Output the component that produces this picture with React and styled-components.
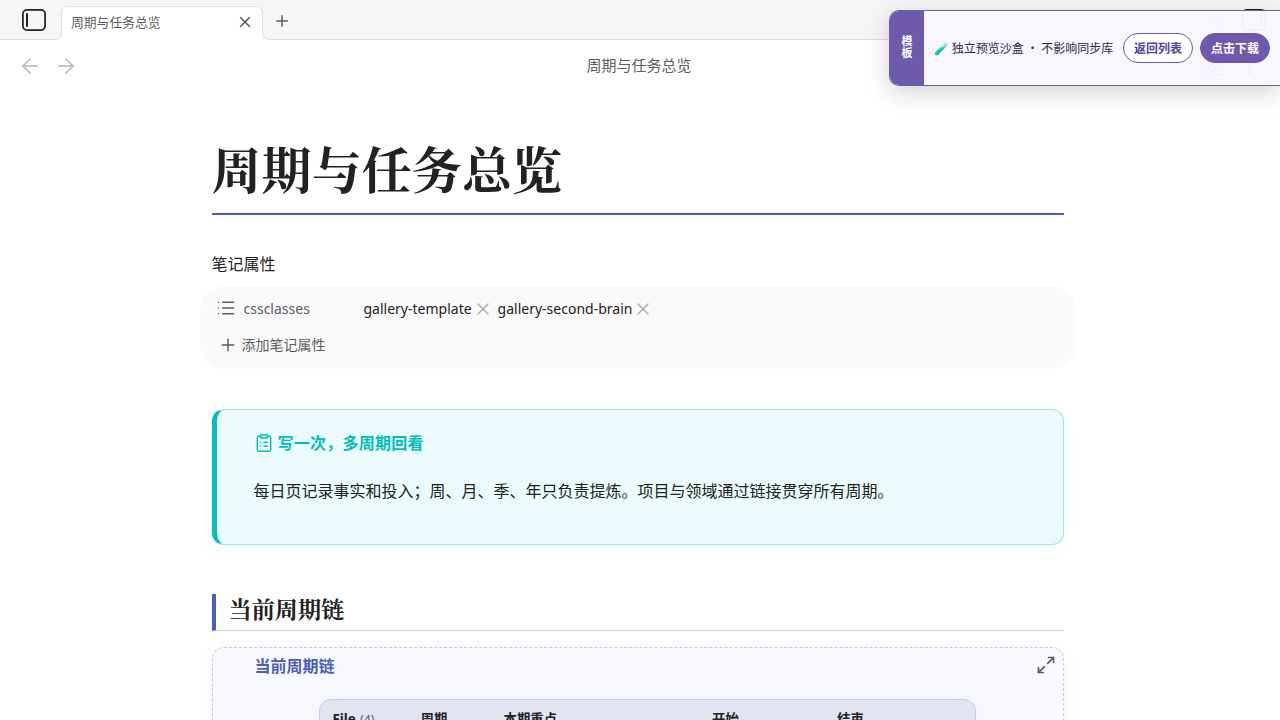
import styled, { createGlobalStyle } from 'styled-components'
import {
  ArrowLeft,
  ArrowRight,
  ChevronDown,
  ClipboardList,
  EllipsisVertical,
  List,
  Maximize2,
  PenLine,
  Plus,
  X,
} from 'lucide-react'

//STYLES
const GlobalStyle = createGlobalStyle`
  * {
    box-sizing: border-box;
  }

  body {
    margin: 0;
    background-color: #ffffff;
    color: #222222;
    font-family: 'Noto Sans', 'Noto Sans CJK SC', sans-serif;
    font-size: 16px;
    overflow: hidden;
  }

  svg {
    display: block;
    flex-shrink: 0;
  }
`

const Workspace = styled.div`
  height: 720px;
  overflow: hidden;
`

const TabBar = styled.div`
  display: flex;
  align-items: flex-end;
  height: 40px;
  padding: 0 14px 0 22px;
  background-color: #f6f6f6;
  box-shadow: inset 0 -1px 0 #e0e0e0;
`

const SidebarToggle = styled.div`
  height: 32px;
  margin-right: ${(props) => (props.$right ? 0 : '15px')};
  color: #222222;
`

const Tab = styled.div`
  position: relative;
  display: flex;
  align-items: center;
  justify-content: space-between;
  width: 202px;
  height: 34px;
  padding: 0 8px 4px 9px;
  background-color: #ffffff;
  border: 1px solid #e0e0e0;
  border-bottom: none;
  border-radius: 6px 6px 0 0;
  color: #5c5c5c;
  font-size: 12.8px;

  &::before,
  &::after {
    content: '';
    position: absolute;
    bottom: 0;
    width: 7px;
    height: 7px;
  }

  &::before {
    left: -7px;
    background: radial-gradient(
      circle at 0 0,
      #f6f6f6 5.5px,
      #e0e0e0 6px,
      #e0e0e0 6.5px,
      #ffffff 7px
    );
  }

  &::after {
    right: -7px;
    background: radial-gradient(
      circle at 100% 0,
      #f6f6f6 5.5px,
      #e0e0e0 6px,
      #e0e0e0 6.5px,
      #ffffff 7px
    );
  }
`

const NewTab = styled.div`
  display: flex;
  align-items: center;
  height: 38px;
  margin-left: 10px;
  color: #5c5c5c;
`

const TabBarEnd = styled.div`
  display: flex;
  align-items: center;
  gap: 15px;
  margin-left: auto;
  color: #5c5c5c;
`

const ViewHeader = styled.div`
  display: grid;
  grid-template-columns: 1fr auto 1fr;
  align-items: center;
  height: 52px;
  padding: 0 18px;
  color: #5c5c5c;
  font-size: 15px;
`

const HeaderIcons = styled.div`
  display: flex;
  gap: 12px;
  justify-content: ${(props) => (props.$end ? 'flex-end' : 'flex-start')};
  color: ${(props) => (props.$end ? '#5c5c5c' : '#b4b4b4')};
`

const HeaderTitle = styled.div`
  padding: 0 2px 3px 0;
`

const Note = styled.main`
  width: 852px;
  margin: 0 0 0 211.5px;
  padding-top: 42px;
`

const NoteTitle = styled.h1`
  height: 81px;
  margin: 0;
  border-bottom: 2px solid #4a5fb5;
  font-family: 'Noto Serif CJK SC', 'Noto Serif SC', serif;
  font-size: 50.1px;
  font-weight: 700;
  line-height: 66px;
`

const PropertiesTitle = styled.div`
  margin-top: 37px;
  line-height: 24px;
`

const Properties = styled.section`
  height: 83px;
  margin: 10px -12px 0;
  padding: 7px 16px;
  background-color: #fafafa;
  border-radius: 24px;
  font-size: 14px;
`

const PropertyRow = styled.div`
  display: flex;
  align-items: center;
  height: 31px;
`

const PropertyKey = styled.div`
  display: flex;
  align-items: center;
  gap: 8px;
  width: 148px;
  color: #5c5c5c;

  svg {
    margin-top: -1px;
  }
`

const Pill = styled.div`
  display: flex;
  align-items: center;
  gap: 1px;
  margin-right: 5px;

  svg {
    color: #ababab;
  }
`

const AddProperty = styled.div`
  display: flex;
  align-items: center;
  gap: 4px;
  height: 40px;
  padding-left: 2px;
  color: #5c5c5c;

  svg {
    margin-top: 2px;
  }
`

const Callout = styled.section`
  height: 136px;
  margin-top: 40px;
  padding: 20px 24px 0 37px;
  background-color: #ebfafa;
  border: 1px solid #99e5e3;
  border-left: 5px solid #00bfbc;
  border-radius: 12px;
  box-shadow: 0 4px 16px rgba(0, 191, 188, 0.06);
`

const CalloutTitle = styled.div`
  display: flex;
  align-items: center;
  gap: 4px;
  height: 24px;
  color: #00bfbc;
  font-weight: 700;
  letter-spacing: 0.24px;

  svg {
    margin-top: 2px;
  }
`

const CalloutText = styled.p`
  margin: 25px 0 0;
  line-height: 24px;
`

const SectionTitle = styled.h2`
  height: 37px;
  margin: 49px 0 16px;
  padding-left: 13px;
  border-left: 4px solid #4a5fb5;
  border-bottom: 1px solid #c9d0e4;
  font-family: 'Noto Serif CJK SC', 'Noto Serif SC', serif;
  font-size: 23.2px;
  font-weight: 700;
  line-height: 29px;
`

const Embed = styled.section`
  height: 300px;
  background-color: #f8f9fd;
  border: 1px dashed #c5cbea;
  border-radius: 12px;
  box-shadow: 0 4px 16px rgba(74, 95, 181, 0.06);
`

const EmbedHeader = styled.div`
  display: flex;
  align-items: center;
  justify-content: space-between;
  height: 34px;
  padding: 0 6.5px 0 42px;
  color: #4a5fb5;
  font-weight: 700;

  svg {
    color: #5c5c5c;
  }
`

const TableHead = styled.div`
  display: grid;
  grid-template-columns: 88px 83px 208.5px 125px 1fr;
  align-items: start;
  width: 657px;
  height: 260px;
  margin: 17px 0 0 106px;
  padding: 9px 13px;
  background-color: #e1e5f2;
  border: 1px solid #c5cbea;
  border-radius: 12px;
  box-shadow: 0 4px 16px rgba(74, 95, 181, 0.06);
  font-size: 13.4px;
  font-weight: 700;
  line-height: 20px;
`

const Count = styled.span`
  margin-left: 0.6px;
  color: #5c5c5c;
  font-size: 12.4px;
  font-weight: 400;
`

const Banner = styled.aside`
  position: absolute;
  top: 10px;
  right: 0;
  display: flex;
  align-items: center;
  width: 391px;
  height: 76px;
  padding-right: 10px;
  background-color: rgba(248, 246, 255, 0.965);
  border: 1px solid #6d5aac;
  border-right: none;
  border-radius: 10px 0 0 10px;
  box-shadow: 0 6px 24px rgba(0, 0, 0, 0.18);
  overflow: hidden;
  color: #2e2750;
  font-size: 12px;
  white-space: nowrap;
`

const BannerLabel = styled.div`
  display: flex;
  align-items: center;
  justify-content: center;
  align-self: stretch;
  width: 34px;
  margin-right: 10px;
  padding-bottom: 2px;
  background-color: #6d5aac;
  color: #ffffff;
  font-size: 11px;
  font-weight: 700;
  line-height: 12px;
  text-align: center;

  span {
    width: 11px;
    white-space: normal;
  }
`

const BannerText = styled.div`
  flex: 1;
  word-spacing: -0.4px;
`

const BannerButton = styled.button`
  height: 30px;
  margin-left: 7px;
  width: 70px;
  padding: 0;
  border: 1px solid #6d5aac;
  border-radius: 15px;
  background-color: ${(props) => (props.$primary ? '#6d5aac' : '#ffffff')};
  color: ${(props) => (props.$primary ? '#ffffff' : '#5840a0')};
  font-family: inherit;
  font-size: 12px;
  font-weight: 700;
`

//LOGIC
const columns = ['周期', '本期重点', '开始', '结束']
const cssclasses = ['gallery-template', 'gallery-second-brain']

const SidebarIcon = ({ right }) => (
  <svg width="24" height="24" viewBox="0 0 24 24" fill="none">
    <rect
      x="0.9"
      y="1.9"
      width="22.2"
      height="20.2"
      rx="4"
      stroke="currentColor"
      strokeWidth="1.75"
    />
    <rect
      x={right ? 18 : 4}
      y="5"
      width="2"
      height="14"
      rx="1"
      fill="currentColor"
    />
  </svg>
)

const App = () => {
  return (
    <Workspace>
      <GlobalStyle />
      <TabBar>
        <SidebarToggle>
          <SidebarIcon />
        </SidebarToggle>
        <Tab>
          周期与任务总览
          <X size={18} strokeWidth={2} />
        </Tab>
        <NewTab>
          <Plus size={18} strokeWidth={2} />
        </NewTab>
        <TabBarEnd>
          <ChevronDown size={18} strokeWidth={1.75} />
          <SidebarToggle $right>
            <SidebarIcon right />
          </SidebarToggle>
        </TabBarEnd>
      </TabBar>

      <ViewHeader>
        <HeaderIcons>
          <ArrowLeft size={24} strokeWidth={1.5} />
          <ArrowRight size={24} strokeWidth={1.5} />
        </HeaderIcons>
        <HeaderTitle>周期与任务总览</HeaderTitle>
        <HeaderIcons $end>
          <PenLine size={24} strokeWidth={1.5} />
          <EllipsisVertical size={24} strokeWidth={1.75} />
        </HeaderIcons>
      </ViewHeader>

      <Note>
        <NoteTitle>周期与任务总览</NoteTitle>

        <PropertiesTitle>笔记属性</PropertiesTitle>
        <Properties>
          <PropertyRow>
            <PropertyKey>
              <List size={20} strokeWidth={1.75} />
              cssclasses
            </PropertyKey>
            {cssclasses.map((name) => (
              <Pill key={name}>
                {name}
                <X size={20} strokeWidth={1.75} />
              </Pill>
            ))}
          </PropertyRow>
          <AddProperty>
            <Plus size={20} strokeWidth={1.75} />
            添加笔记属性
          </AddProperty>
        </Properties>

        <Callout>
          <CalloutTitle>
            <ClipboardList size={20} strokeWidth={1.75} />
            写一次，多周期回看
          </CalloutTitle>
          <CalloutText>
            每日页记录事实和投入；周、月、季、年只负责提炼。项目与领域通过链接贯穿所有周期。
          </CalloutText>
        </Callout>

        <SectionTitle>当前周期链</SectionTitle>
        <Embed>
          <EmbedHeader>
            当前周期链
            <Maximize2 size={20} strokeWidth={2} />
          </EmbedHeader>
          <TableHead>
            <div>
              File <Count>(4)</Count>
            </div>
            {columns.map((column) => (
              <div key={column}>{column}</div>
            ))}
          </TableHead>
        </Embed>
      </Note>

      <Banner>
        <BannerLabel>
          <span>模板</span>
        </BannerLabel>
        <BannerText>🧪 独立预览沙盒 ・ 不影响同步库</BannerText>
        <BannerButton>返回列表</BannerButton>
        <BannerButton $primary>点击下载</BannerButton>
      </Banner>
    </Workspace>
  )
}

export default App
